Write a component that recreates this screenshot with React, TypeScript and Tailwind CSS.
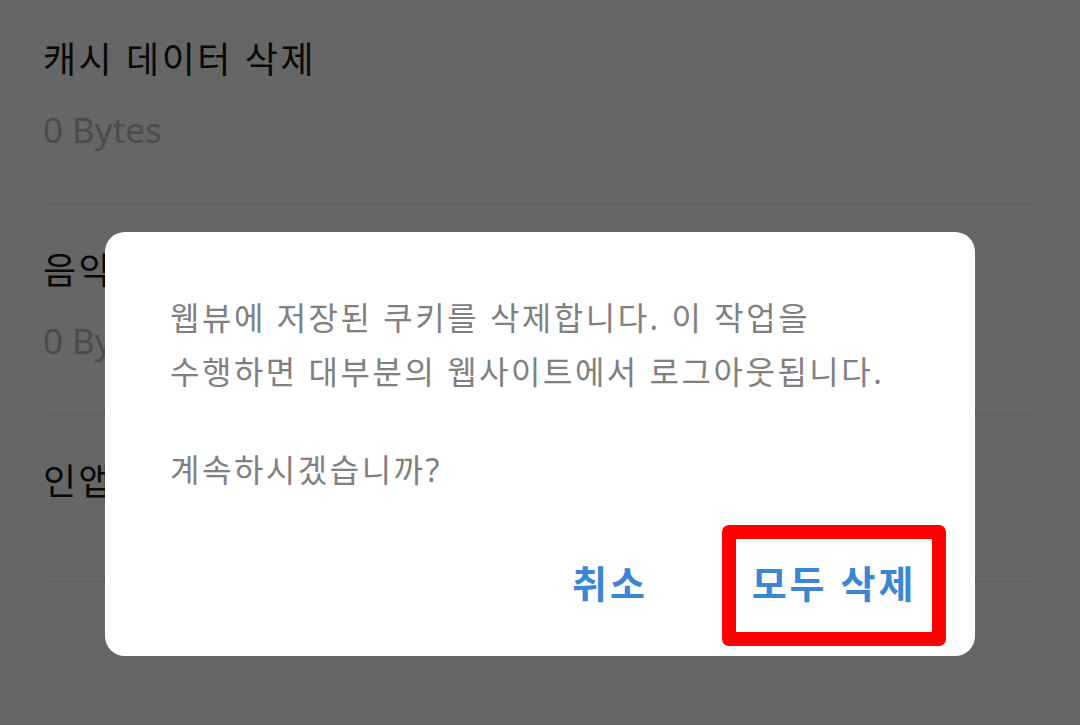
const items = [
  { title: "캐시 데이터 삭제", sub: "0 Bytes" },
  { title: "음악 데이터 삭제", sub: "0 Bytes" },
  { title: "인앱 브라우저 쿠키 삭제", sub: "" },
];

export default function App() {
  return (
    <div
      className="relative h-[725px] w-[1080px] overflow-hidden bg-white"
      style={{ fontFamily: '"Noto Sans", "Noto Sans CJK KR", sans-serif' }}
    >
      {/* settings list behind the dialog */}
      <div className="-mt-[7px] flex flex-col px-[43px]">
        {items.map((item) => (
          <div key={item.title} className="flex flex-col border-b border-[#ededed] pt-[43px] pb-[51px]">
            <div className="text-[36px] leading-[48px] tracking-[2.5px] text-[#141414]">{item.title}</div>
            <div className="mt-[24px] text-[35px] leading-[44px] text-[#bdbdbd]">{item.sub}</div>
          </div>
        ))}
      </div>

      {/* dim + dialog */}
      <div className="absolute inset-0 flex items-end justify-center bg-black/60 pb-[69px]">
        <div className="flex w-[870px] flex-col rounded-[20px] bg-white pt-[59px]">
          <div className="px-[65px] text-[32px] leading-[54px] tracking-[2.5px] text-[#808080]">
            <p>웹뷰에 저장된 쿠키를 삭제합니다. 이 작업을</p>
            <p>수행하면 대부분의 웹사이트에서 로그아웃됩니다.</p>
            <p className="mt-[44px]">계속하시겠습니까?</p>
          </div>
          <div className="mt-[28px] flex items-center justify-end gap-[56px] pr-[29px] pb-[10px]">
            <button className="px-[18px] pb-[5px] text-[38px] font-bold leading-[50px] tracking-[3px] text-[#3a86d4]">취소</button>
            <button className="flex h-[121px] w-[224px] items-center justify-center rounded-[7px] border-[14px] border-[#ff0000] pb-[5px] text-[38px] font-bold leading-[50px] tracking-[3px] text-[#3a86d4]">
              모두 삭제
            </button>
          </div>
        </div>
      </div>
    </div>
  );
}
